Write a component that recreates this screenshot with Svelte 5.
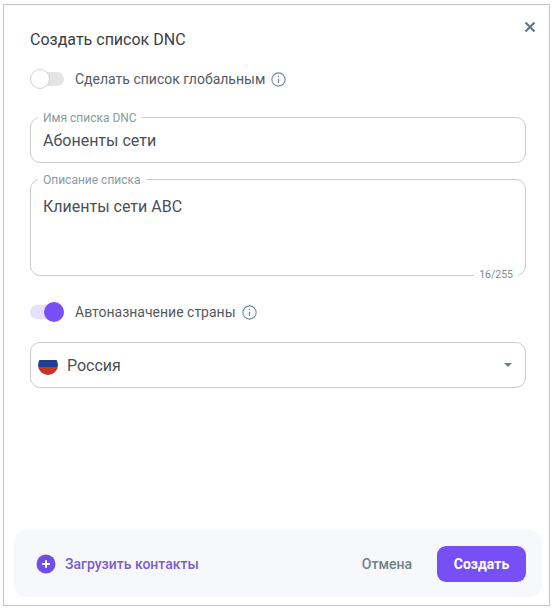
<script>
  let globalList = false;
  let autoCountry = true;
</script>

<div class="page">
  <div class="dialog">
    <button class="close" aria-label="Закрыть">
      <svg viewBox="0 0 12 12" width="12" height="12">
        <path d="M1.5 1.5l9 9m0-9l-9 9" stroke="#5f7a8a" stroke-width="2.2" fill="none" />
      </svg>
    </button>

    <div class="body">
      <h2 class="title">Создать список DNC</h2>

      <div class="switch-row first">
        <span class="switch" class:on={globalList}><span class="knob"></span></span>
        <span class="switch-label">Сделать список глобальным</span>
        <svg class="info" viewBox="0 0 14 14" width="15" height="15">
          <circle cx="7" cy="7" r="6.2" fill="none" stroke="#6f8794" stroke-width="1" />
          <path d="M7 6.2v4M7 3.6v1.3" stroke="#6f8794" stroke-width="1.2" fill="none" />
        </svg>
      </div>

      <div class="field name">
        <span class="legend">Имя списка DNC</span>
        <span class="value">Абоненты сети</span>
      </div>

      <div class="field description">
        <span class="legend">Описание списка</span>
        <span class="value">Клиенты сети АВС</span>
        <span class="counter">16/255</span>
      </div>

      <div class="switch-row second">
        <span class="switch" class:on={autoCountry}><span class="knob"></span></span>
        <span class="switch-label">Автоназначение страны</span>
        <svg class="info" viewBox="0 0 14 14" width="15" height="15">
          <circle cx="7" cy="7" r="6.2" fill="none" stroke="#6f8794" stroke-width="1" />
          <path d="M7 6.2v4M7 3.6v1.3" stroke="#6f8794" stroke-width="1.2" fill="none" />
        </svg>
      </div>

      <div class="field country">
        <svg class="flag" viewBox="0 0 20 20" width="20" height="20">
          <clipPath id="flag-clip"><circle cx="10" cy="10" r="10" /></clipPath>
          <g clip-path="url(#flag-clip)">
            <rect y="0" width="20" height="5" fill="#ffffff" />
            <rect y="5" width="20" height="7" fill="#1c3f94" />
            <rect y="12" width="20" height="8" fill="#c9341f" />
          </g>
        </svg>
        <span class="value">Россия</span>
        <span class="arrow"></span>
      </div>
    </div>

    <div class="footer">
      <button class="upload">
        <svg viewBox="0 0 20 20" width="20" height="20">
          <circle cx="10" cy="10" r="9.5" fill="#6f4ee8" />
          <path d="M10 6.2v7.6M6.2 10h7.6" stroke="#fff" stroke-width="2" />
        </svg>
        Загрузить контакты
      </button>
      <button class="cancel">Отмена</button>
      <button class="create">Создать</button>
    </div>
  </div>
</div>

<style>
  :global(body) {
    margin: 0;
    background: #fff;
    font-family: Roboto, "Liberation Sans", sans-serif;
  }

  .page {
    padding: 4px 5px 4px 3px;
  }

  .dialog {
    position: relative;
    box-sizing: border-box;
    height: 602px;
    border: 1px solid #c2c5c8;
    display: flex;
    flex-direction: column;
    justify-content: space-between;
    background: #fff;
  }

  .close {
    position: absolute;
    top: 16px;
    right: 13px;
    border: 0;
    padding: 0;
    background: none;
    display: flex;
  }

  .body {
    padding: 25px 23px 0 26px;
  }

  .title {
    margin: 0;
    font-size: 16px;
    font-weight: 400;
    line-height: 20px;
    color: #3a4045;
  }

  .switch-row {
    display: flex;
    align-items: center;
    height: 22px;
  }

  .switch-row.first {
    margin-top: 18px;
  }

  .switch-row.second {
    margin-top: 25px;
  }

  .switch {
    position: relative;
    width: 34px;
    height: 14px;
    border-radius: 7px;
    background: #e2e4e6;
  }

  .switch.on {
    background: #e7e0fb;
  }

  .knob {
    position: absolute;
    left: 0;
    top: -3px;
    box-sizing: border-box;
    width: 20px;
    height: 20px;
    border-radius: 50%;
    background: #fff;
    border: 1px solid #cfd2d5;
  }

  .switch.on .knob {
    left: 14px;
    background: #7650f5;
    border: 0;
  }

  .switch-label {
    margin-left: 11px;
    font-size: 14px;
    color: #535b60;
  }

  .info {
    margin-left: 6px;
  }

  .field {
    position: relative;
    box-sizing: border-box;
    border: 1px solid #c9cccf;
    border-radius: 10px;
    padding: 0 12px;
    color: #4a5156;
    font-size: 16px;
  }

  .name {
    margin-top: 27px;
    height: 46px;
    display: flex;
    align-items: center;
  }

  .description {
    margin-top: 16px;
    height: 97px;
    padding-top: 17px;
    line-height: 20px;
  }

  .country {
    margin-top: 19px;
    height: 46px;
    display: flex;
    align-items: center;
    padding-left: 7px;
  }

  .legend {
    position: absolute;
    left: 7px;
    top: -7px;
    padding: 0 5px;
    background: #fff;
    font-size: 12px;
    line-height: 14px;
    color: #8b9aa3;
  }

  .counter {
    position: absolute;
    right: 7px;
    bottom: -7px;
    padding: 0 5px;
    background: #fff;
    font-size: 10.5px;
    line-height: 14px;
    color: #7d8c95;
  }

  .flag {
    margin-right: 9px;
  }

  .arrow {
    margin-left: auto;
    margin-right: 1px;
    width: 0;
    height: 0;
    border-left: 4.5px solid transparent;
    border-right: 4.5px solid transparent;
    border-top: 4.5px solid #6d7f89;
  }

  .footer {
    margin: 0 7px 8px 10px;
    height: 67px;
    box-sizing: border-box;
    padding: 0 16px 0 22px;
    border-radius: 12px;
    background: #f7f8fb;
    display: flex;
    align-items: center;
  }

  .footer button {
    font-family: inherit;
    font-size: 14px;
    border: 0;
    background: none;
    padding: 0;
  }

  .upload {
    display: flex;
    align-items: center;
    gap: 9px;
    color: #7a5fc9;
    font-weight: 500;
  }

  .cancel {
    margin-left: auto;
    color: #6f8288;
    font-weight: 500;
  }

  .footer .create {
    margin-left: 25px;
    width: 89px;
    height: 36px;
    border-radius: 9px;
    background: #7650f5;
    color: #fff;
    font-weight: 700;
  }
</style>
